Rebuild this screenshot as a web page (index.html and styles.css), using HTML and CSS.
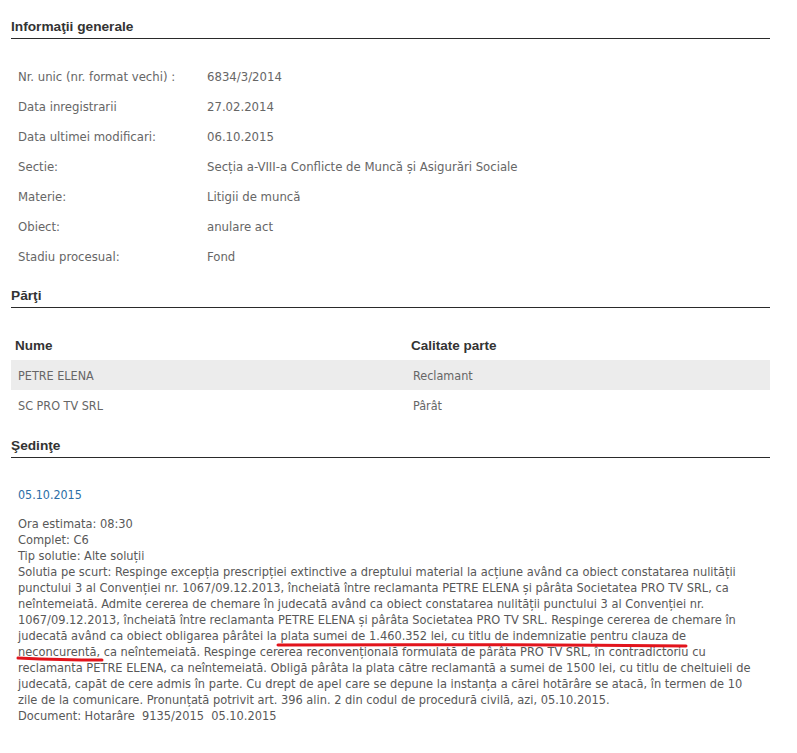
FILE: index.html
```html
<!DOCTYPE html>
<html lang="ro">
<head>
<meta charset="utf-8">
<title>Dosar 6834/3/2014</title>
<link rel="stylesheet" href="styles.css">
</head>
<body>
<div class="page">
  <section class="section">
    <h2 class="section-title">Informaţii generale</h2>
    <dl class="info">
      <div class="info-row"><dt>Nr. unic (nr. format vechi) :</dt><dd>6834/3/2014</dd></div>
      <div class="info-row"><dt>Data inregistrarii</dt><dd>27.02.2014</dd></div>
      <div class="info-row"><dt>Data ultimei modificari:</dt><dd>06.10.2015</dd></div>
      <div class="info-row"><dt>Sectie:</dt><dd>Secția a-VIII-a Conflicte de Muncă și Asigurări Sociale</dd></div>
      <div class="info-row"><dt>Materie:</dt><dd>Litigii de muncă</dd></div>
      <div class="info-row"><dt>Obiect:</dt><dd>anulare act</dd></div>
      <div class="info-row"><dt>Stadiu procesual:</dt><dd>Fond</dd></div>
    </dl>
  </section>

  <section class="section section-parti">
    <h2 class="section-title">Părţi</h2>
    <div class="parti">
      <div class="parti-row parti-head"><span>Nume</span><span>Calitate parte</span></div>
      <div class="parti-row parti-alt"><span>PETRE ELENA</span><span>Reclamant</span></div>
      <div class="parti-row"><span>SC PRO TV SRL</span><span>Pârât</span></div>
    </div>
  </section>

  <section class="section section-sedinte">
    <h2 class="section-title">Şedinţe</h2>
    <div class="sedinta">
      <div class="sedinta-date">05.10.2015</div>
      <div class="sedinta-body">
        <div>Ora estimata: 08:30</div>
        <div>Complet: C6</div>
        <div>Tip solutie: Alte soluții</div>
        <p class="solutie">Solutia pe scurt: Respinge excepția prescripției extinctive a dreptului material la acțiune având ca obiect constatarea nulității punctului 3 al Convenției nr. 1067/09.12.2013, încheiată între reclamanta PETRE ELENA și pârâta Societatea PRO TV SRL, ca neîntemeiată. Admite cererea de chemare în judecată având ca obiect constatarea nulității punctului 3 al Convenției nr. 1067/09.12.2013, încheiată între reclamanta PETRE ELENA și pârâta Societatea PRO TV SRL. Respinge cererea de chemare în judecată având ca obiect obligarea pârâtei la plata sumei de 1.460.352 lei, cu titlu de indemnizatie pentru clauza de neconcurentă, ca neîntemeiată. Respinge cererea reconvențională formulată de pârâta PRO TV SRL, în contradictoriu cu reclamanta PETRE ELENA, ca neîntemeiată. Obligă pârâta la plata către reclamantă a sumei de 1500 lei, cu titlu de cheltuieli de judecată, capăt de cere admis în parte. Cu drept de apel care se depune la instanța a cărei hotărâre se atacă, în termen de 10 zile de la comunicare. Pronunțată potrivit art. 396 alin. 2 din codul de procedură civilă, azi, 05.10.2015.</p>
        <div>Document: Hotarâre&nbsp; 9135/2015&nbsp; 05.10.2015</div>
      </div>
    </div>
  </section>

  <svg class="annot" viewBox="0 0 797 753" width="797" height="753" aria-hidden="true">
    <path d="M278 645 Q480 644 686 646" fill="none" stroke="#e2141c" stroke-width="3" stroke-linecap="round"/>
    <path d="M18 658 Q62 660 102 660" fill="none" stroke="#e2141c" stroke-width="3" stroke-linecap="round"/>
  </svg>
</div>
</body>
</html>
```

FILE: styles.css
```css
html, body {
  margin: 0;
  padding: 0;
  background: #fff;
}

.page {
  position: relative;
  width: 759px;
  height: 753px;
  padding: 19px 27px 0 11px;
  overflow: hidden;
  font-family: "DejaVu Sans Condensed", "DejaVu Sans", sans-serif;
  color: #666;
}

.section-title {
  margin: 0;
  padding: 0 0 3px 0;
  font-family: "Liberation Sans", Arial, sans-serif;
  font-size: 13.7px;
  font-weight: bold;
  line-height: 16px;
  color: #333;
  border-bottom: 1px solid #2a2a2a;
}

.info {
  margin: 22px 0 0 0;
  padding: 0;
}

.info-row {
  display: flex;
  align-items: center;
  height: 30px;
  font-size: 13px;
}

.info-row dt {
  width: 189px;
  padding-left: 7px;
}

.info-row dd {
  margin: 0;
}

.section-parti {
  margin-top: 17px;
}

.parti {
  margin-top: 22px;
}

.parti-row {
  display: grid;
  grid-template-columns: 396px 1fr;
  align-items: center;
  height: 30px;
  font-size: 12.5px;
}

.parti-row span:first-child {
  padding-left: 7px;
}

.parti-row span:last-child {
  padding-left: 6px;
}

.parti-head {
  font-family: "Liberation Sans", Arial, sans-serif;
  font-size: 13.5px;
  font-weight: bold;
  color: #333;
}

.parti-head span:first-child {
  padding-left: 4px;
}

.parti-head span:last-child {
  padding-left: 4px;
}

.parti-alt {
  background: #ececec;
}

.section-sedinte {
  margin-top: 18px;
}

.sedinta {
  padding-left: 7px;
}

.sedinta-date {
  margin-top: 29px;
  font-size: 12.4px;
  line-height: 16px;
  color: #2b6ea6;
}

.sedinta-body {
  margin-top: 13px;
  padding-right: 12px;
  font-size: 12.7px;
  line-height: 16px;
  color: #585858;
}

.solutie {
  margin: 0;
}

.annot {
  position: absolute;
  top: 0;
  left: 0;
  pointer-events: none;
}
```
